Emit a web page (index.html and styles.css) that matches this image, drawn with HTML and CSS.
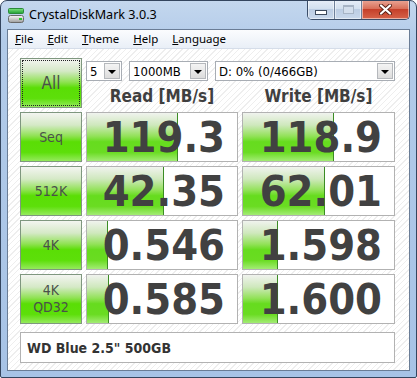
FILE: index.html
```html
<!DOCTYPE html>
<html lang="en">
<head>
    <meta charset="UTF-8">
    <title>CrystalDiskMark 3.0.3</title>
    <link rel="stylesheet" href="styles.css">
</head>
<body>
    <div class="window">
        <div class="titlebar">
            <svg class="app-icon" width="17" height="17" viewBox="0 0 17 17">
                <defs>
                    <linearGradient id="g-top" x1="0" y1="0" x2="0" y2="1">
                        <stop offset="0" stop-color="#7fe27f"/>
                        <stop offset="1" stop-color="#1f9f33"/>
                    </linearGradient>
                    <linearGradient id="g-drive" x1="0" y1="0" x2="0" y2="1">
                        <stop offset="0" stop-color="#fafafa"/>
                        <stop offset="1" stop-color="#9c9c9c"/>
                    </linearGradient>
                </defs>
                <rect x="0.5" y="1.5" width="15" height="5" rx="1" fill="url(#g-top)" stroke="#2a8a3a"/>
                <rect x="0.5" y="8.5" width="15" height="7" rx="2" fill="url(#g-drive)" stroke="#6a6a6a"/>
                <rect x="11" y="11" width="3" height="2" fill="#29c72d"/>
            </svg>
            <span class="title">CrystalDiskMark 3.0.3</span>
            <div class="controls">
                <div class="ctl">
                    <span class="min-glyph"></span>
                </div>
                <div class="ctl">
                    <span class="max-glyph"></span>
                </div>
                <div class="ctl close">
                    <svg width="13" height="11" viewBox="0 0 13 11">
                        <path d="M2 1.5 L11 9.5 M11 1.5 L2 9.5" stroke="#5a2218" stroke-width="4" stroke-linecap="round"/>
                        <path d="M2 1.5 L11 9.5 M11 1.5 L2 9.5" stroke="#ffffff" stroke-width="2.2" stroke-linecap="round"/>
                    </svg>
                </div>
            </div>
        </div>

        <div class="client">
            <div class="menubar">
                <span class="menu-item"><u>F</u>ile</span>
                <span class="menu-item"><u>E</u>dit</span>
                <span class="menu-item"><u>T</u>heme</span>
                <span class="menu-item"><u>H</u>elp</span>
                <span class="menu-item"><u>L</u>anguage</span>
            </div>

            <div class="panel">
                <div class="grid">
                    <div class="btn btn-all">All</div>
                    <div class="top-right">
                        <div class="combos">
                            <div class="combo combo-count"><span>5</span><i class="arrow"></i></div>
                            <div class="combo combo-size"><span>1000MB</span><i class="arrow"></i></div>
                            <div class="combo combo-drive"><span>D: 0% (0/466GB)</span><i class="arrow"></i></div>
                        </div>
                        <div class="headers">
                            <div class="head">Read [MB/s]</div>
                            <div class="head">Write [MB/s]</div>
                        </div>
                    </div>

                    <div class="btn">Seq</div>
                    <div class="cell"><div class="bar" style="width: 91px"></div><span class="val">119.3</span></div>
                    <div class="cell"><div class="bar" style="width: 91px"></div><span class="val">118.9</span></div>

                    <div class="btn">512K</div>
                    <div class="cell"><div class="bar" style="width: 77px"></div><span class="val">42.35</span></div>
                    <div class="cell"><div class="bar" style="width: 82px"></div><span class="val">62.01</span></div>

                    <div class="btn">4K</div>
                    <div class="cell"><div class="bar" style="width: 21px"></div><span class="val">0.546</span></div>
                    <div class="cell"><div class="bar" style="width: 35px"></div><span class="val">1.598</span></div>

                    <div class="btn btn-two">4K<br>QD32</div>
                    <div class="cell"><div class="bar" style="width: 22px"></div><span class="val">0.585</span></div>
                    <div class="cell"><div class="bar" style="width: 35px"></div><span class="val">1.600</span></div>
                </div>

                <div class="comment">WD Blue 2.5" 500GB</div>
            </div>
        </div>
    </div>
</body>
</html>
```

FILE: styles.css
```css
* {
  box-sizing: border-box;
}

body {
  margin: 0;
  background: #ffffff;
}

.window {
  width: 417px;
  height: 378px;
  border: 1px solid #34455e;
  border-radius: 7px 7px 2px 2px;
  background: linear-gradient(#c4d7ee, #b2cbe9 40px, #a7c3e6);
  overflow: hidden;
}

/* title bar */

.titlebar {
  display: flex;
  align-items: flex-start;
  height: 28px;
  padding-left: 7px;
}

.app-icon {
  margin-top: 6px;
}

.title {
  margin-left: 4px;
  margin-top: 5px;
  font-family: "Noto Sans", sans-serif;
  font-size: 12.6px;
  color: #000;
}

.controls {
  display: flex;
  margin-left: auto;
  margin-right: 6px;
  margin-top: -1px;
  height: 20px;
  border: 1px solid #3b4d68;
  border-top: none;
  border-radius: 0 0 5px 5px;
  overflow: hidden;
}

.ctl {
  width: 27px;
  display: flex;
  align-items: center;
  justify-content: center;
  background: linear-gradient(#e7eef8, #d3e0ef 45%, #bccde3 50%, #c9d8eb);
  border-right: 1px solid #6e809a;
  box-shadow: inset 0 0 0 1px rgba(255, 255, 255, 0.5);
}

.ctl.close {
  width: 47px;
  border-right: none;
  background: linear-gradient(#eaa797, #d8705a 45%, #c5402a 50%, #d6634a);
}

.min-glyph {
  width: 12px;
  height: 5px;
  margin-top: 5px;
  background: #fff;
  border: 1px solid #3d4a5c;
}

.max-glyph {
  width: 11px;
  height: 9px;
  border: 1px solid #a7b4c5;
  border-top-width: 2px;
  background: #d3deec;
}

/* client area */

.client {
  margin: 0 6px;
  height: 342px;
  border: 1px solid #6a7d96;
  background: #fff;
}

.menubar {
  display: flex;
  height: 19px;
  background: linear-gradient(#fbfcfe, #e9eff7);
  border-bottom: 1px solid #d5dde9;
}

.menu-item {
  padding: 0 7px;
  font-family: "Noto Sans", sans-serif;
  font-size: 11.5px;
  line-height: 18px;
  color: #000;
}

.panel {
  height: 321px;
  padding: 9px 0 0 12px;
  background: repeating-linear-gradient(135deg, #ffffff 0 3px, #eeeeee 3px 4px);
}

.grid {
  display: grid;
  grid-template-columns: 62px 152px 153px;
  grid-template-rows: repeat(5, 50px);
  column-gap: 4px;
  row-gap: 4px;
}

.btn {
  display: flex;
  align-items: center;
  justify-content: center;
  text-align: center;
  border: 1px solid #7f977f;
  background: linear-gradient(#f3f5f1, #d5e9c7 25%, #8fe252 48%, #5ade05 60%, #5ddf0a 82%, #95ea5c);
  font-family: "DejaVu Sans Condensed", sans-serif;
  font-size: 14px;
  color: #4a514a;
}

.btn-all {
  font-size: 17px;
  outline: 1px dotted #222;
  outline-offset: -3px;
}

.btn-two {
  line-height: 17px;
}

.top-right {
  grid-column: 2 / 4;
  display: flex;
  flex-direction: column;
}

.combos {
  display: flex;
  gap: 7px;
  margin-top: 3px;
}

.combo {
  display: flex;
  align-items: center;
  height: 20px;
  padding-left: 3px;
  border: 1px solid #a8adb4;
  background: #fff;
  font-family: "DejaVu Sans Condensed", sans-serif;
  font-size: 13px;
  color: #000;
}

.combo span {
  flex: 1;
}

.combo-count {
  width: 36px;
}

.combo-size {
  width: 79px;
}

.combo-drive {
  width: 180px;
}

.arrow {
  width: 16px;
  height: 16px;
  margin-right: 1px;
  border: 1px solid #b5b8bc;
  background: linear-gradient(#f4f4f4, #dcdcdc);
  position: relative;
}

.arrow::after {
  content: "";
  position: absolute;
  left: 3px;
  top: 6px;
  border-left: 4px solid transparent;
  border-right: 4px solid transparent;
  border-top: 4px solid #000;
}

.headers {
  display: grid;
  grid-template-columns: 152px 153px;
  column-gap: 4px;
  margin-top: 5px;
}

.head {
  text-align: center;
  font-family: "DejaVu Sans Condensed", sans-serif;
  font-weight: bold;
  font-size: 17px;
  color: #3f3f3f;
}

.cell {
  display: flex;
  align-items: center;
  justify-content: flex-end;
  position: relative;
  border: 1px solid #b2b2b2;
  background: #fff;
  padding-right: 12px;
}

.bar {
  position: absolute;
  left: 0;
  top: 0;
  bottom: 0;
  border-right: 1px solid #3b8c24;
  background: linear-gradient(#f0f3ee, #cfe8bd 25%, #93e25a 48%, #66dc1e 60%, #6adc22 82%, #a3ec74);
}

.val {
  position: relative;
  font-family: "DejaVu Sans Condensed", sans-serif;
  font-weight: bold;
  font-size: 43px;
  line-height: 1;
  color: #414141;
}

.comment {
  width: 375px;
  height: 31px;
  margin-top: 8px;
  padding-left: 6px;
  display: flex;
  align-items: center;
  border: 1px solid #b2b2b2;
  background: #fff;
  font-family: "DejaVu Sans Condensed", sans-serif;
  font-weight: bold;
  font-size: 14px;
  color: #333;
}
```
